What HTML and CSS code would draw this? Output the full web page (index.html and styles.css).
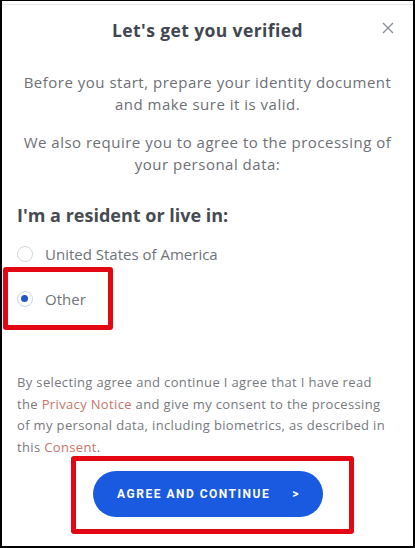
FILE: index.html
```html
<!DOCTYPE html>
<html lang="en">
<head>
<meta charset="utf-8">
<title>Let's get you verified</title>
<link rel="stylesheet" href="styles.css">
</head>
<body>
<div class="frame">
  <div class="dialog">
    <header class="head">
      <h1 class="title">Let's get you verified</h1>
      <button class="close" aria-label="Close">
        <svg width="12" height="12" viewBox="0 0 12 12"><path d="M1 1L11 11M11 1L1 11" stroke="#8a8d93" stroke-width="1.3" fill="none"/></svg>
      </button>
    </header>
    <p class="para p1">Before you start, prepare your identity document and make sure it is valid.</p>
    <p class="para p2">We also require you to agree to the processing of your personal data:</p>
    <h2 class="resident">I'm a resident or live in:</h2>
    <div class="options">
      <label class="option">
        <span class="radio"></span>
        <span class="opt-label">United States of America</span>
      </label>
      <label class="option selected">
        <span class="radio checked"></span>
        <span class="opt-label">Other</span>
        <span class="mark mark-other"></span>
      </label>
    </div>
    <p class="legal">By selecting agree and continue I agree that I have read the <a class="link">Privacy Notice</a> and give my consent to the processing of my personal data, including biometrics, as described in this <a class="link">Consent</a>.</p>
    <div class="actions">
      <button class="agree"><span>AGREE AND CONTINUE</span><span class="chev">&gt;</span></button>
      <span class="mark mark-btn"></span>
    </div>
  </div>
</div>
</body>
</html>
```
FILE: styles.css
```css
html, body {
  margin: 0;
  padding: 0;
  background: #fff;
}
.frame {
  width: 415px;
  height: 548px;
  box-sizing: border-box;
  border: 2px solid #000;
  border-top-width: 1px;
  background: #fff;
  overflow: hidden;
}
.dialog {
  height: 100%;
  box-sizing: border-box;
  border-top: 1px solid #e6e6e6;
  margin-top: 3px;
  padding: 0 15px;
  font-family: "Open Sans", "Noto Sans", sans-serif;
  color: #6b6e73;
  display: flex;
  flex-direction: column;
}
.head {
  position: relative;
  padding-top: 13px;
}
.title {
  margin: 0;
  text-align: center;
  font-size: 17.5px;
  line-height: 24px;
  font-weight: 700;
  letter-spacing: 0.4px;
  color: #41464f;
}
.close {
  position: absolute;
  right: 0;
  top: 13px;
  width: 20px;
  height: 20px;
  padding: 0;
  border: 0;
  background: transparent;
  display: flex;
  align-items: center;
  justify-content: center;
}
.para {
  margin: 0;
  text-align: center;
  font-size: 15px;
  line-height: 22px;
  letter-spacing: 0.5px;
  color: #6d7075;
}
.p1 { margin-top: 29px; }
.p2 { margin-top: 16px; }
.resident {
  margin: 28px 0 0 0;
  font-size: 18px;
  line-height: 24px;
  font-weight: 700;
  color: #474b52;
}
.options {
  margin-top: 12px;
  display: flex;
  flex-direction: column;
  gap: 15px;
}
.option {
  position: relative;
  display: flex;
  align-items: center;
  height: 30px;
  gap: 12px;
  padding-left: 0;
}
.radio {
  width: 16px;
  height: 16px;
  border-radius: 50%;
  border: 1.5px solid #d4d6d9;
  box-sizing: border-box;
  background: #fff;
  position: relative;
}
.radio.checked {
  border-color: #c9d6ee;
}
.radio.checked::after {
  content: "";
  position: absolute;
  left: 3px;
  top: 3px;
  width: 7px;
  height: 7px;
  border-radius: 50%;
  background: #2356c8;
}
.opt-label {
  font-size: 15px;
  color: #707378;
}
.mark {
  position: absolute;
  border: 5px solid #e30613;
  border-radius: 3px;
  pointer-events: none;
}
.mark-other {
  left: -14px;
  top: -17px;
  width: 100px;
  height: 53px;
}
.legal {
  margin: 58px 0 0 0;
  max-width: 376px;
  font-size: 13px;
  line-height: 21.5px;
  letter-spacing: 0.35px;
  color: #76797e;
}
.link {
  color: #c9736a;
  text-decoration: none;
}
.actions {
  position: relative;
  margin-top: 13px;
  display: flex;
  justify-content: center;
}
.agree {
  width: 230px;
  height: 46px;
  border: 0;
  border-radius: 23px;
  background: #1a5ae0;
  color: #fff;
  font-family: Roboto, "Liberation Sans", sans-serif;
  font-weight: 700;
  font-size: 12px;
  letter-spacing: 1.5px;
  display: flex;
  align-items: center;
  justify-content: center;
  gap: 22px;
  padding: 0 0 0 2px;
}
.chev {
  font-size: 12px;
}
.mark-btn {
  left: 54px;
  top: -15px;
  width: 273px;
  height: 68px;
}
```
